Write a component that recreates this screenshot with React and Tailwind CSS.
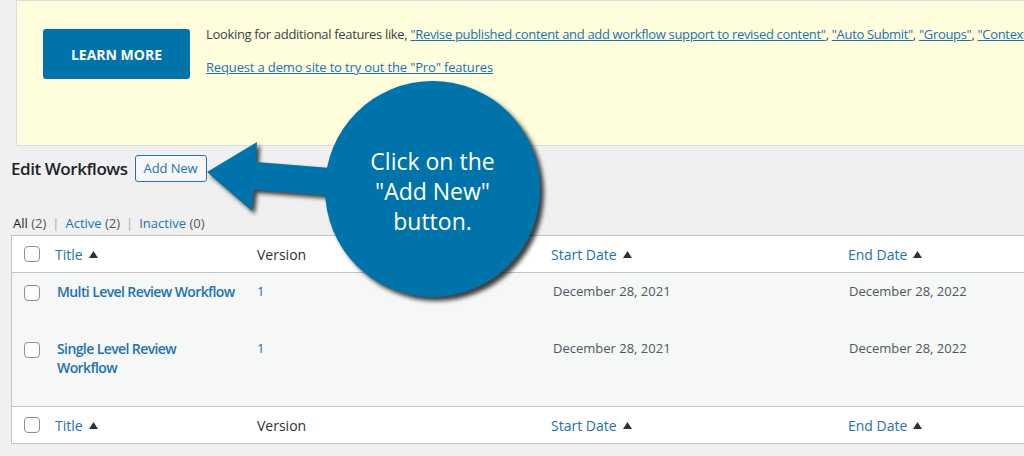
import React from "react";

const Tri = () => (
  <svg className="inline-block ml-[6px] w-[9px] h-[7px] align-[2px]" viewBox="0 0 9 7">
    <polygon points="4.5,0 9,7 0,7" fill="#2c3338" />
  </svg>
);

const Box = () => (
  <span className="block w-[16px] h-[16px] rounded-[4px] border border-[#8c8f94] bg-white" />
);

function HeadRow({ top }) {
  return (
    <div className={`flex items-center h-[37px] bg-white text-[14px] ${top ? "border-b" : "border-t"} border-[#c3c4c7]`}>
      <div className="w-[43px] pl-[12px]"><Box /></div>
      <div className="w-[202px] text-[#2271b1]">Title<Tri /></div>
      <div className="w-[294px] text-[#2c3338]">Version</div>
      <div className="w-[297px] text-[#2271b1]">Start Date<Tri /></div>
      <div className="w-[200px] text-[#2271b1]">End Date<Tri /></div>
    </div>
  );
}

function Row({ children, h }) {
  return (
    <div className={`flex items-start bg-[#f6f7f7] pt-[9px] ${h}`}>
      <div className="w-[43px] pl-[12px] pt-[3px]"><Box /></div>
      <div className="w-[202px] pl-[2px] text-[14px] leading-[19px] font-semibold text-[#2271b1] whitespace-nowrap tracking-[-0.6px]">{children}</div>
      <div className="w-[294px] text-[13px] leading-[19px] text-[#2271b1]">1</div>
      <div className="w-[297px] pl-[2px] text-[13px] leading-[19px] text-[#50575e]">December 28, 2021</div>
      <div className="w-[200px] pl-[1px] text-[13px] leading-[19px] text-[#50575e]">December 28, 2022</div>
    </div>
  );
}

export default function App() {
  return (
    <div
      className="relative w-[1024px] h-[456px] overflow-hidden bg-[#f0f0f1] text-[#1d2327]"
      style={{ fontFamily: '"Open Sans", "Noto Sans", sans-serif' }}
    >
      {/* Banner */}
      <div className="ml-[16px] w-[1100px] h-[146px] border border-[#dcdcde] bg-[#fefedc] flex items-start pt-[28px] pl-[26px]">
        <div className="shrink-0 w-[147px] h-[50px] rounded-[3px] bg-[#0073aa] text-white text-[14px] font-bold flex items-center justify-center">
          LEARN MORE
        </div>
        <div className="ml-[16px] -mt-[4px] text-[13px] leading-[19px] whitespace-nowrap">
          <div className="tracking-[-0.33px]">
            <span className="text-[#3c434a]">Looking for additional features like, </span>
            <a className="text-[#2271b1] underline">"Revise published content and add workflow support to revised content"</a>
            <span className="text-[#3c434a]">, </span>
            <a className="text-[#2271b1] underline">"Auto Submit"</a>
            <span className="text-[#3c434a]">, </span>
            <a className="text-[#2271b1] underline">"Groups"</a>
            <span className="text-[#3c434a]">, </span>
            <a className="text-[#2271b1] underline">"Contextual Comments"</a>
          </div>
          <div className="mt-[14px] tracking-[-0.15px]">
            <a className="text-[#2271b1] underline">Request a demo site to try out the "Pro" features</a>
          </div>
        </div>
      </div>

      {/* Heading */}
      <div className="flex items-center pl-[11px] mt-[9px] h-[27px]">
        <h1 className="text-[17px] font-semibold text-[#1d2327] tracking-[-0.45px]">Edit Workflows</h1>
        <button className="ml-[7px] h-[27px] px-[8px] rounded-[3px] border border-[#2271b1] bg-[#f6f7f7] text-[13px] text-[#2271b1] tracking-[-0.1px]">
          Add New
        </button>
      </div>

      {/* Filters */}
      <div className="pl-[13px] mt-[32px] text-[13px] leading-[18px] whitespace-nowrap">
        <span className="text-[#1d2327]">All</span>
        <span className="text-[#50575e]"> (2)</span>
        <span className="text-[#a7aaad] px-[6px]">|</span>
        <span className="text-[#2271b1]">Active</span>
        <span className="text-[#50575e]"> (2)</span>
        <span className="text-[#a7aaad] px-[6px]">|</span>
        <span className="text-[#2271b1]">Inactive</span>
        <span className="text-[#50575e]"> (0)</span>
      </div>

      {/* Table */}
      <div className="ml-[11px] mt-[3px] w-[1100px] border border-[#c3c4c7]">
        <HeadRow top />
        <Row h="h-[57px]">Multi Level Review Workflow</Row>
        <Row h="h-[76px]">
          Single Level Review
          <br />
          Workflow
        </Row>
        <HeadRow />
      </div>

      {/* Arrow callout */}
      <svg
        className="absolute left-[200px] top-[135px] w-[135px] h-[85px] overflow-visible drop-shadow-[3px_3px_2px_rgba(0,0,0,0.75)]"
        viewBox="0 0 135 85"
      >
        <polygon
          points="7,37 57,7 56,27 131,33 131,61 54,55 52,76"
          fill="#0073aa"
        />
      </svg>

      {/* Circle callout */}
      <div className="absolute left-[325px] top-[81px] w-[215px] h-[216px] rounded-full bg-[#0073aa] shadow-[4px_4px_4px_rgba(0,0,0,0.75)] flex items-center justify-center">
        <div className="text-white text-center text-[23px] leading-[30px] pt-[4px]">
          Click on the
          <br />
          "Add New"
          <br />
          button.
        </div>
      </div>
    </div>
  );
}
